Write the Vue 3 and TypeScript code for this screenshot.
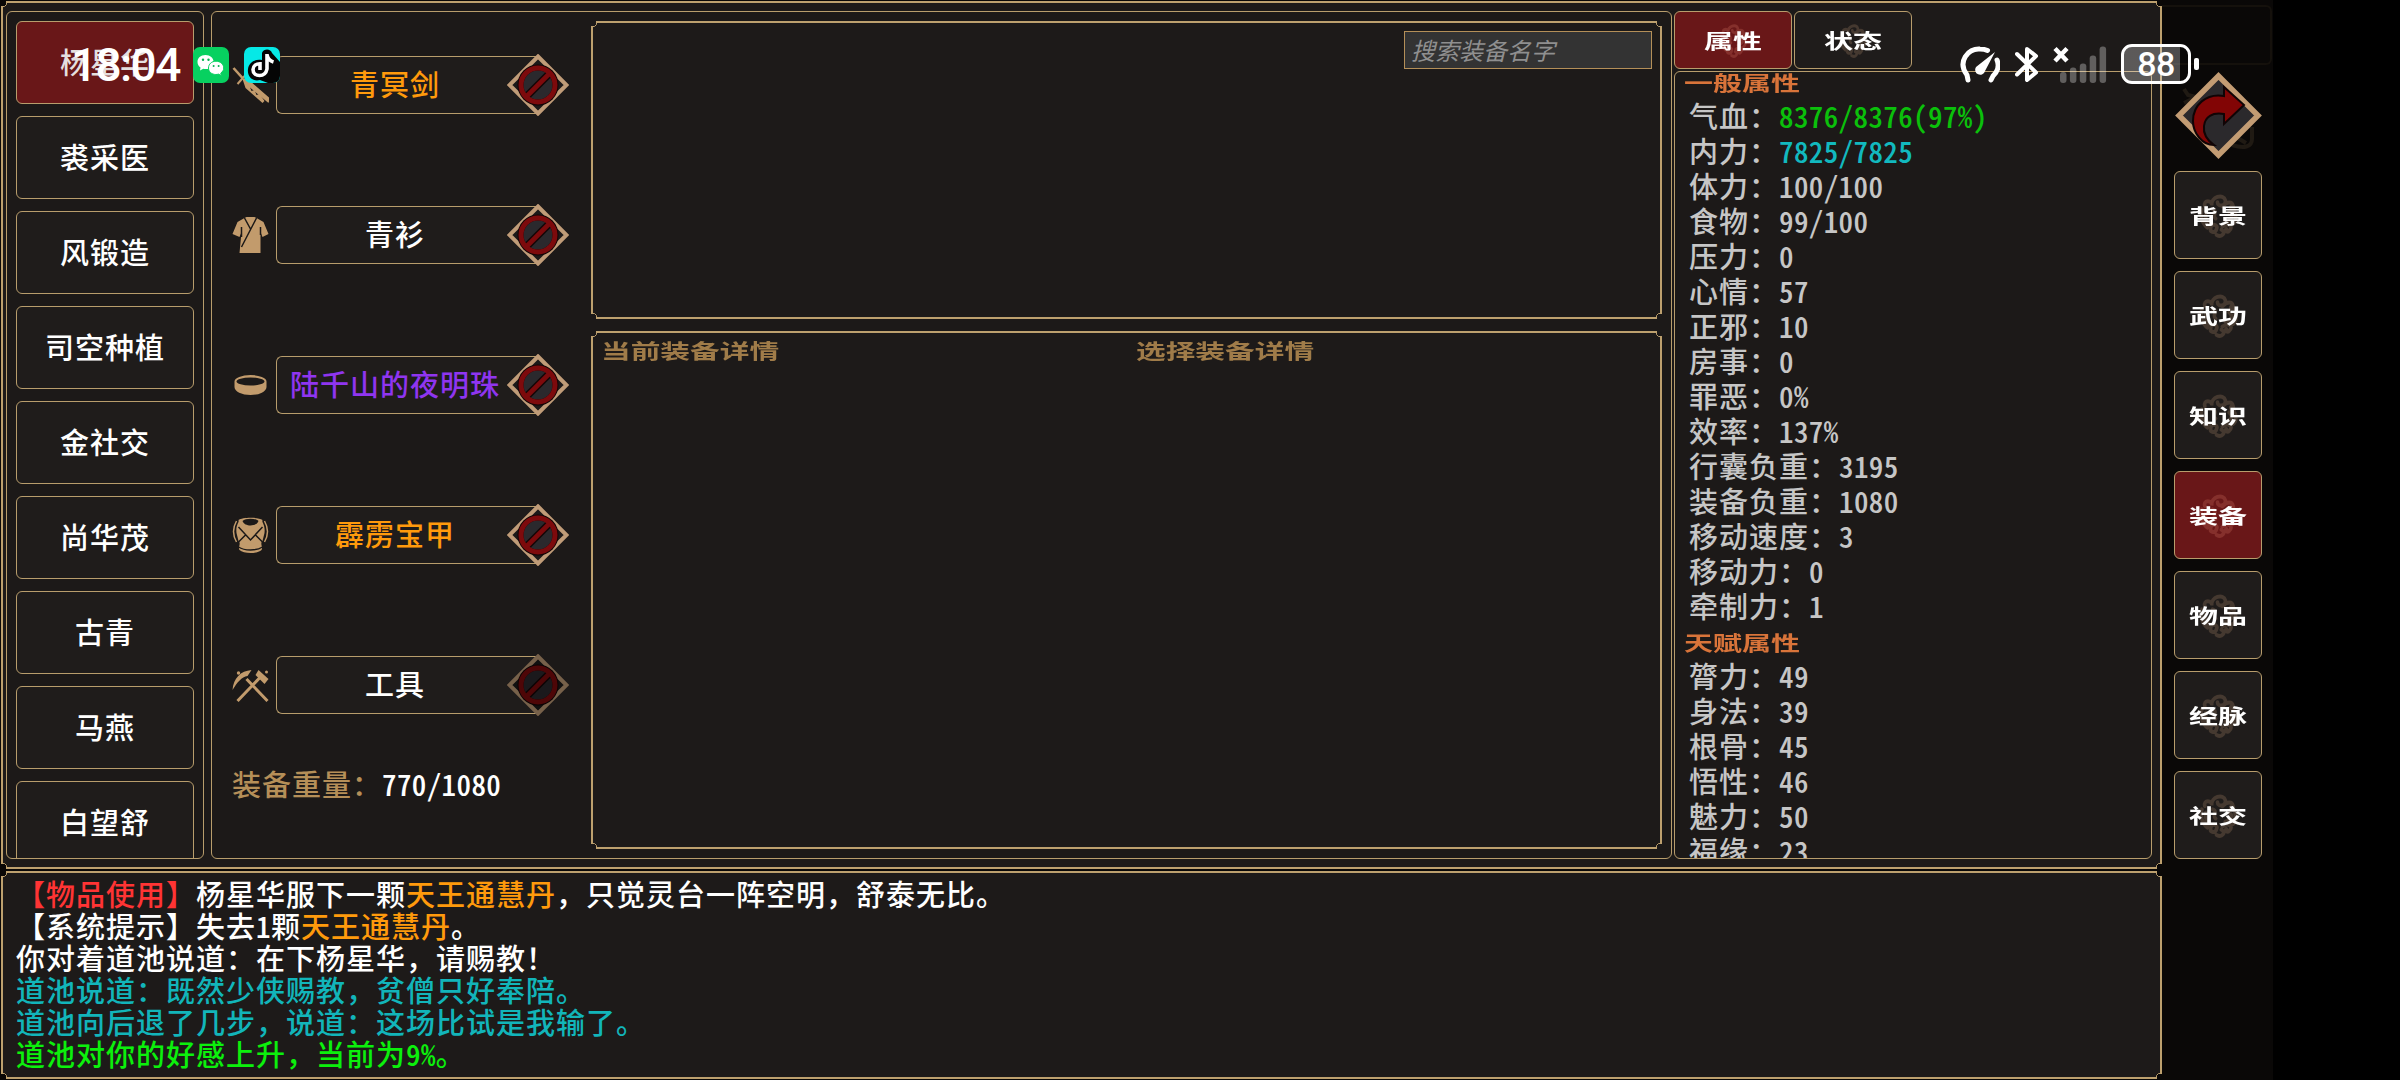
<template>
  <div class="screen">
    <div class="game">
      <div class="board">
        <section class="window frame">
          <aside class="roster panel">
            <button
              v-for="(name, i) in roster"
              :key="name"
              class="member"
              :class="{ active: i === 0 }"
            >{{ name }}</button>
          </aside>

          <main class="equip panel">
            <div class="slots">
              <div v-for="slot in slots" :key="slot.kind" class="slot">
                <svg class="slot-icon" viewBox="0 0 36 36">
                  <template v-if="slot.kind === 'sword'">
                    <path d="M1 1 L10 11" stroke-width="2.6" />
                    <path d="M5 17 L13 8" stroke-width="2" />
                    <path class="solid" d="M10 12 L14 11 L37 31 L37 36 L17 19 L19 24 L22 23 L24 28 L27 27 L32 34 L30 36 L13 21 Z" />
                    <path class="solid" d="M11 13 L36 34 L36 36 L12 16 Z" />
                  </template>
                  <template v-else-if="slot.kind === 'robe'">
                    <path class="solid" d="M12 1 L14 0 H22 L24 1 L31 5 L36 17 L30 20 L28 15 V36 H7 L9 15 L7 20 L0 17 L5 5 Z" />
                    <path class="cut" d="M12 1 L18 12 M24 1 L9 30 M9 10 V20 M28 10 V18" />
                  </template>
                  <template v-else-if="slot.kind === 'ring'">
                    <path class="solid" fill-rule="evenodd" d="M2 14.5 A16 6.5 0 0 1 34 14.5 V20 A16 8 0 0 1 2 20 Z M4 14.5 A14 4 0 1 0 32 14.5 A14 4 0 1 0 4 14.5 Z" />
                  </template>
                  <template v-else-if="slot.kind === 'armor'">
                    <path class="solid" d="M6 3 C10 0 26 0 30 3 C29 6 33 7 32 16 L30 24 C27 27 31 30 29 33 C25 37 11 37 7 33 C5 30 9 27 6 24 L4 16 C3 7 7 6 6 3 Z" />
                    <path class="dark" d="M10 4 C13 1 23 1 26 4 C24 10 12 10 10 4 Z" />
                    <path class="cut" d="M6 10 L18 23 L30 10 M6 25 L13 18 M30 25 L23 18 M6 30 C12 34 24 34 30 30" />
                    <path d="M4 4 C0 11 0 18 4 25 M32 4 C36 11 36 18 32 25" stroke-width="1.5" />
                  </template>
                  <template v-else>
                    <path d="M5 34 L28 10 M35 34 L14 12" stroke-width="3" />
                    <path class="solid" d="M0 23 C1 11 8 4 19 3 L15 9 C9 10 5 15 0 23 Z" />
                    <path class="solid" d="M26 3 L36 12 L32 17 L23 8 Z" />
                    <circle class="solid" cx="6" cy="6" r="1.7" />
                    <circle class="solid" cx="34" cy="5" r="1.5" />
                  </template>
                </svg>
                <div class="slot-box" :style="{ color: slot.color }">{{ slot.name }}</div>
                <svg class="unequip" :class="{ dim: slot.kind === 'tool' }" viewBox="0 0 62 62">
                  <path d="M31 2.5 L59.5 31 L31 59.5 L2.5 31 Z" fill="#1c1919" stroke="#c09c78" stroke-width="4" />
                  <circle cx="31" cy="31" r="20.5" fill="#120506" />
                  <circle cx="31" cy="31" r="14.5" fill="#2b292d" />
                  <path d="M21 41 L41 21" stroke="#120506" stroke-width="7.5" />
                  <circle cx="31" cy="31" r="17" fill="none" stroke="#7d0a0c" stroke-width="5" />
                  <path d="M19 43 L43 19" stroke="#7d0a0c" stroke-width="4.8" />
                </svg>
              </div>
              <div class="weight">装备重量：<span class="weight-value half">770/1080</span></div>
            </div>

            <div class="bags">
              <div class="bag frame">
                <input class="search" type="text" placeholder="搜索装备名字">
              </div>
              <div class="detail frame">
                <div class="detail-col"><span class="li">当前装备详情</span></div>
                <div class="detail-col"><span class="li">选择装备详情</span></div>
              </div>
            </div>
          </main>

          <aside class="stats">
            <div class="tabs">
              <button v-for="(tab, i) in tabs" :key="tab" class="tab" :class="{ active: i === 0 }">
                <svg class="emblem" viewBox="0 0 40 44" preserveAspectRatio="none"><use href="#cloud" /></svg>
                <span class="li">{{ tab }}</span>
              </button>
            </div>
            <div class="stats-panel panel">
              <div class="stats-scroll">
                <template v-for="group in groups" :key="group.title">
                  <div class="stats-title"><span class="li">{{ group.title }}</span></div>
                  <div v-for="row in group.rows" :key="row[0]" class="stats-row">
                    {{ row[0] }}：<span class="half" :style="{ color: row[2] }">{{ row[1] }}</span>
                  </div>
                </template>
              </div>
            </div>
          </aside>
        </section>

        <section class="log frame">
          <p v-for="(line, i) in log" :key="i">
            <span
              v-for="(part, j) in line"
              :key="j"
              :class="{ half: isHalf(part[0]) }"
              :style="{ color: part[1] }"
            >{{ part[0] }}</span>
          </p>
        </section>
      </div>

      <nav class="side">
        <svg class="back" viewBox="0 0 88 88">
          <path d="M10 18 L14 24 L22 26 L10 32 M78 56 V68 C78 76 70 78 58 74 M62 66 L72 72" fill="none" stroke="#201a13" stroke-width="4" />
          <path d="M44.5 5 L84 44.5 L44.5 84 L5 44.5 Z" fill="#2b292c" stroke="#c39c73" stroke-width="5.5" />
          <path d="M50 16 L70 34 L50 53 V43 C38 41 31 46 30 55 C29 63 33 69 40 74 C28 74 19 62 19 50 C19 34 32 22 50 25 Z" fill="#820505" stroke="#100405" stroke-width="2" />
        </svg>
        <button v-for="item in nav" :key="item" class="nav-item" :class="{ active: item === '装备' }">
          <svg class="emblem" viewBox="0 0 40 44" preserveAspectRatio="none"><use href="#cloud" /></svg>
          <span class="li">{{ item }}</span>
        </button>
      </nav>
      <div class="ghost-box"></div>
    </div>

    <!-- phone status bar, floats over the game -->
    <div class="status-left">
      <span class="clock">18:04</span>
      <svg class="app wechat" viewBox="0 0 36 36">
        <rect width="36" height="36" rx="7" fill="#07d160" />
        <path d="M12.5 8 C7.5 8 4.5 11 4.5 15 C4.5 17.5 5.8 19.3 7.5 20.5 L7 23.5 L10.3 21.8 C11 22 12 22.1 13 22.1 C17.5 22.1 20.6 19 20.6 15 C20.6 11 17.2 8 12.5 8 Z" fill="#fff" />
        <path d="M23 14.2 C18.6 14.2 15.5 17.2 15.5 21 C15.5 24.8 18.7 27.5 22.8 27.5 C23.8 27.5 24.6 27.4 25.4 27.1 L28.3 28.6 L27.8 26 C29.7 24.8 30.7 23 30.7 21 C30.7 17.2 27.4 14.2 23 14.2 Z" fill="#fff" stroke="#07d160" stroke-width="1" />
        <g fill="#07b553"><circle cx="10" cy="12.8" r="1.2" /><circle cx="15.5" cy="12.8" r="1.2" /><circle cx="20.6" cy="19" r="1" /><circle cx="25.6" cy="19" r="1" /></g>
      </svg>
      <svg class="app" viewBox="0 0 36 36">
        <rect width="36" height="36" rx="7" fill="#06e9e6" />
        <path d="M18 6 C20 1 27 2 28 6 L36 15 V29 A7 7 0 0 1 29 36 H24 L16 33 C8 35 3 29 4 22 C5 15 11 12 18 13 Z" fill="#050505" />
        <path d="M23 7 V22 C22 27 19 28.5 15.5 28.5 C11.5 28.5 9 26 9 22.5 C9 19 12 16.8 16 16.8 V23 M23 8 C24 12 26 14 29.5 15" fill="none" stroke="#fff" stroke-width="3.6" />
      </svg>
    </div>
    <div class="status-right">
      <svg class="gauge" viewBox="0 0 41 37">
        <path d="M9 34 L8 29 C-2 16 9 2 21 3 C24 3 26.5 3.5 28.5 4.5 M38 14 C41 21 38 26 34 30 L32 34" fill="none" stroke="#fff" stroke-width="5" stroke-linecap="round" stroke-linejoin="round" />
        <path d="M36 6 L26 25 A5 5 0 1 1 17 21 Z" fill="#fff" />
      </svg>
      <svg class="bluetooth" viewBox="0 0 24 37">
        <path d="M2 8 L21 26.5 L12 34 V3 L21 10 L2 28.5" fill="none" stroke="#fff" stroke-width="4" stroke-linecap="round" stroke-linejoin="round" />
      </svg>
      <svg class="signal" viewBox="0 0 54 37">
        <path d="M2 2.5 L14 15 M14 2.5 L2 15" stroke="#fff" stroke-width="4.5" />
        <g fill="#fff" fill-opacity=".3">
          <rect v-for="(h, i) in bars" :key="i" :x="7 + i * 9.9" :y="37 - h" width="6.5" :height="h" rx="3" />
        </g>
      </svg>
      <div class="battery"><span>88</span></div>
    </div>

    <svg class="defs" width="0" height="0">
      <symbol id="cloud" viewBox="0 0 40 44" preserveAspectRatio="none">
        <g fill="none" stroke="currentColor" stroke-width="3.8" stroke-linecap="round">
          <path d="M6 13 C4 6 14 7 13 12 C12 4 25 0 27 7 C28 13 19 14 19 9 M24 13 C29 8 34 8 35 13 C32 12 31 16 36 17" />
          <path d="M3 16 C1 22 3 30 9 34 M7 19 C6 25 8 30 12 31 M14 16 C20 18 13 22 17 25" />
          <path d="M12 34 C13 29 20 31 18 35 C17 40 11 38 12 36 M18 41 C24 44 28 38 23 36 M24 33 C30 28 36 33 31 37 C29 39 26 37 28 35" />
          <path d="M37 20 C39 26 37 30 33 31 M31 19 C36 23 33 27 27 28" />
        </g>
      </symbol>
    </svg>
  </div>
</template>

<script setup lang="ts">
type Part = [text: string, color?: string]
type Row = [label: string, value: string, color?: string]

interface Slot {
  kind: 'sword' | 'robe' | 'ring' | 'armor' | 'tool'
  name: string
  color: string
}

const roster = ['杨星华', '裘采医', '风锻造', '司空种植', '金社交', '尚华茂', '古青', '马燕', '白望舒']

const slots: Slot[] = [
  { kind: 'sword', name: '青冥剑', color: '#ff9a0c' },
  { kind: 'robe', name: '青衫', color: '#ffffff' },
  { kind: 'ring', name: '陆千山的夜明珠', color: '#8f35f0' },
  { kind: 'armor', name: '霹雳宝甲', color: '#ff9a0c' },
  { kind: 'tool', name: '工具', color: '#ffffff' }
]

const tabs = ['属性', '状态']
const nav = ['背景', '武功', '知识', '装备', '物品', '经脉', '社交']
const bars = [11, 15.5, 19.5, 27.5, 36.5]

const groups: { title: string; rows: Row[] }[] = [
  {
    title: '一般属性',
    rows: [
      ['气血', '8376/8376(97%)', '#0bc00b'],
      ['内力', '7825/7825', '#12b9bf'],
      ['体力', '100/100'],
      ['食物', '99/100'],
      ['压力', '0'],
      ['心情', '57'],
      ['正邪', '10'],
      ['房事', '0'],
      ['罪恶', '0%'],
      ['效率', '137%'],
      ['行囊负重', '3195'],
      ['装备负重', '1080'],
      ['移动速度', '3'],
      ['移动力', '0'],
      ['牵制力', '1']
    ]
  },
  {
    title: '天赋属性',
    rows: [
      ['膂力', '49'],
      ['身法', '39'],
      ['根骨', '45'],
      ['悟性', '46'],
      ['魅力', '50'],
      ['福缘', '23']
    ]
  }
]

const orange = '#ff9a0c'
const cyan = '#12b5ba'
const green = '#0cf00c'

const log: Part[][] = [
  [['【物品使用】', '#ff3434'], ['杨星华服下一颗'], ['天王通慧丹', orange], ['，只觉灵台一阵空明，舒泰无比。']],
  [['【系统提示】失去'], ['1'], ['颗'], ['天王通慧丹', orange], ['。']],
  [['你对着道池说道：在下杨星华，请赐教！']],
  [['道池说道：既然少侠赐教，贫僧只好奉陪。', cyan]],
  [['道池向后退了几步，说道：这场比试是我输了。', cyan]],
  [['道池对你的好感上升，当前为', green], ['9%', green], ['。', green]]
]

// digits take half a cell, full-width punctuation must stay full
const isHalf = (text: string) => /^[\d%]+$/.test(text)
</script>

<style>
body {
  background: #000;
}
</style>

<style scoped>
.screen {
  position: relative;
  width: 2400px;
  height: 1080px;
  overflow: hidden;
  background: #000;
  color: #fff;
  font-family: "Noto Sans CJK SC", sans-serif;
  font-size: 29px;
  font-weight: 500;
  letter-spacing: 1px;
  text-spacing-trim: space-all;
  white-space: nowrap;
}
.screen * {
  box-sizing: border-box;
}
button,
input {
  padding: 0;
  font: inherit;
  letter-spacing: inherit;
  color: inherit;
}
.half {
  font-feature-settings: "hwid";
  letter-spacing: 0.4px;
}
.game {
  position: relative;
  display: flex;
  width: 2273px;
  height: 1080px;
  background: #0a0807;
}
.board {
  display: flex;
  flex-direction: column;
  gap: 2px;
  width: 2162px;
  padding: 1px 0 1px 1px;
}

/* thin gold frame with notched corners */
.frame {
  border: 1px solid transparent;
  border-image-source: url("data:image/svg+xml,%3Csvg xmlns='http://www.w3.org/2000/svg' width='24' height='24'%3E%3Cpath d='M6 1H18Q18 5.5 23 6V18Q18.5 18.5 18 23H6Q5.5 18.5 1 18V6Q5.5 5.5 6 1Z' fill='%231d1a19'/%3E%3Cpath d='M5 1H19M5 23H19M1 5V19M23 5V19' stroke='%23bda06e' stroke-width='2'/%3E%3Cpath d='M5.5 1V3.5L3.5 5.5H1M18.5 1V3.5L20.5 5.5H23M5.5 23V20.5L3.5 18.5H1M18.5 23V20.5L20.5 18.5H23' fill='none' stroke='%23bda06e'/%3E%3C/svg%3E");
  border-image-slice: 8 fill;
  border-image-width: 8px;
}
.panel {
  border: 1px solid #b89d6c;
  border-radius: 6px;
  background: #1c1918;
  overflow: hidden;
}
.li {
  display: inline-block;
  font-weight: 700;
  font-size: 29px;
  letter-spacing: 0;
  transform: scaleY(0.7);
}
.active {
  background: #691718 !important;
}

.window {
  display: flex;
  height: 868px;
  padding: 9px 9px 9px 4px;
}
.roster {
  display: flex;
  flex-direction: column;
  flex: none;
  gap: 12px;
  width: 198px;
  margin-right: 7px;
  padding: 9px;
}
.member {
  flex: none;
  height: 83px;
  padding-bottom: 3px;
  border: 1px solid #b89d6c;
  border-radius: 6px;
  background: #1f1c1b;
}
.member.active {
  color: #e4dfdf;
}

.equip {
  display: flex;
  flex: none;
  width: 1461px;
  margin-right: 2px;
  padding: 9px 9px 9px 0;
}
.slots {
  display: flex;
  flex-direction: column;
  flex: none;
  gap: 92px;
  width: 379px;
  padding: 35px 0 0 20px;
}
.slot {
  display: flex;
  align-items: center;
  height: 58px;
}
.slot-icon {
  flex: none;
  width: 37px;
  height: 36px;
  margin-right: 7px;
  fill: none;
  stroke: #c29b6c;
}
.solid {
  fill: #c29b6c;
  stroke: none;
}
.dark {
  fill: #1c1918;
  stroke: none;
}
.cut {
  stroke: #1c1918;
  stroke-width: 1.5;
}
.slot-box {
  flex: none;
  width: 262px;
  height: 58px;
  padding-right: 25px;
  border: 1px solid #b89d6c;
  border-right: 0;
  border-radius: 6px 0 0 6px;
  background: #1f1c1b;
  text-align: center;
  line-height: 53px;
}
.unequip {
  flex: none;
  width: 62px;
  height: 62px;
  margin-left: -31px;
}
.dim {
  filter: brightness(0.62);
}
.weight {
  margin-top: -43px;
  color: #b58f58;
  line-height: 40px;
}
.weight-value {
  color: #fff;
}

.bags {
  display: flex;
  flex-direction: column;
  flex: 1;
  gap: 12px;
  min-width: 0;
}
.bag {
  display: flex;
  justify-content: flex-end;
  height: 298px;
  padding: 9px;
}
.search {
  width: 248px;
  height: 38px;
  padding: 0 0 2px 6px;
  border: 1px solid #b48f58;
  background: #333;
  font-size: 24px;
  font-style: italic;
  font-weight: 400;
  letter-spacing: 0;
  outline: none;
}
.search::placeholder {
  color: #8f8f8f;
  opacity: 1;
}
.detail {
  display: grid;
  grid-template-columns: 535px 1fr;
  flex: 1;
  padding: 0 9px;
  color: #a07c49;
}
.detail-col {
  line-height: 37px;
}
.detail .li {
  font-size: 29.7px;
}

.stats {
  display: flex;
  flex-direction: column;
  flex: 1;
}
.tabs {
  display: flex;
  gap: 2px;
  margin-bottom: 2px;
}
.tab {
  display: grid;
  place-items: center;
  width: 118px;
  height: 58px;
  border: 1px solid #b89d6c;
  border-radius: 6px;
  background: #1f1c1b;
}
.tab > *,
.nav-item > * {
  grid-area: 1 / 1;
}
.emblem {
  width: 28px;
  height: 35px;
  color: #453930;
}
.active .emblem {
  color: #85302c;
}
.stats-panel {
  flex: 1;
}
.stats-scroll {
  height: 786px;
  margin-top: -9px;
  color: #c6c6c6;
  line-height: 35px;
}
.stats-title {
  height: 35px;
  padding-left: 9px;
  color: #d9743a;
  line-height: 38px;
}
.stats-row {
  height: 35px;
  padding-left: 14px;
}

.log {
  height: 208px;
  padding: 5px 0 0 14px;
}
.log p {
  margin: 0;
  height: 32px;
  line-height: 32px;
}

.side {
  display: flex;
  flex-direction: column;
  gap: 12px;
  padding: 71px 0 0 12px;
}
.back {
  width: 88px;
  height: 88px;
}
.nav-item {
  display: grid;
  place-items: center;
  width: 88px;
  height: 88px;
  border: 1px solid #b89d6c;
  border-radius: 6px;
  background: #1f1c1b;
}
.nav-item .emblem {
  width: 39px;
  height: 45px;
}
.ghost-box {
  position: absolute;
  top: 5px;
  right: 1px;
  width: 110px;
  height: 60px;
  border: 2px solid #15110c;
  border-left: 0;
  border-radius: 0 6px 6px 0;
}

.status-left {
  position: absolute;
  top: 47px;
  left: 71px;
  display: flex;
  align-items: center;
  height: 36px;
}
.clock {
  width: 122px;
  font: 500 46px/36px Roboto, sans-serif;
  letter-spacing: -1.6px;
}
.app {
  width: 36px;
  height: 36px;
}
.wechat {
  margin-right: 15px;
}
.status-right {
  position: absolute;
  top: 44px;
  left: 1959px;
  display: flex;
  align-items: center;
  height: 40px;
}
.gauge {
  width: 41px;
  height: 37px;
  margin-right: 15px;
}
.bluetooth {
  width: 24px;
  height: 37px;
  margin-right: 14px;
}
.signal {
  width: 54px;
  height: 37px;
  margin-right: 14px;
}
.battery {
  position: relative;
  width: 70px;
  height: 40px;
  border: 3px solid #fff;
  border-radius: 11px;
  background: linear-gradient(90deg, rgba(255, 255, 255, 0.28) 88%, transparent 88%);
  text-align: center;
  font: 500 34px/35px Roboto, sans-serif;
  letter-spacing: -0.5px;
}
.battery::after {
  content: '';
  position: absolute;
  top: 11px;
  right: -11px;
  width: 5px;
  height: 12px;
  border-radius: 2px;
  background: #fff;
}
.defs {
  position: absolute;
}
</style>
